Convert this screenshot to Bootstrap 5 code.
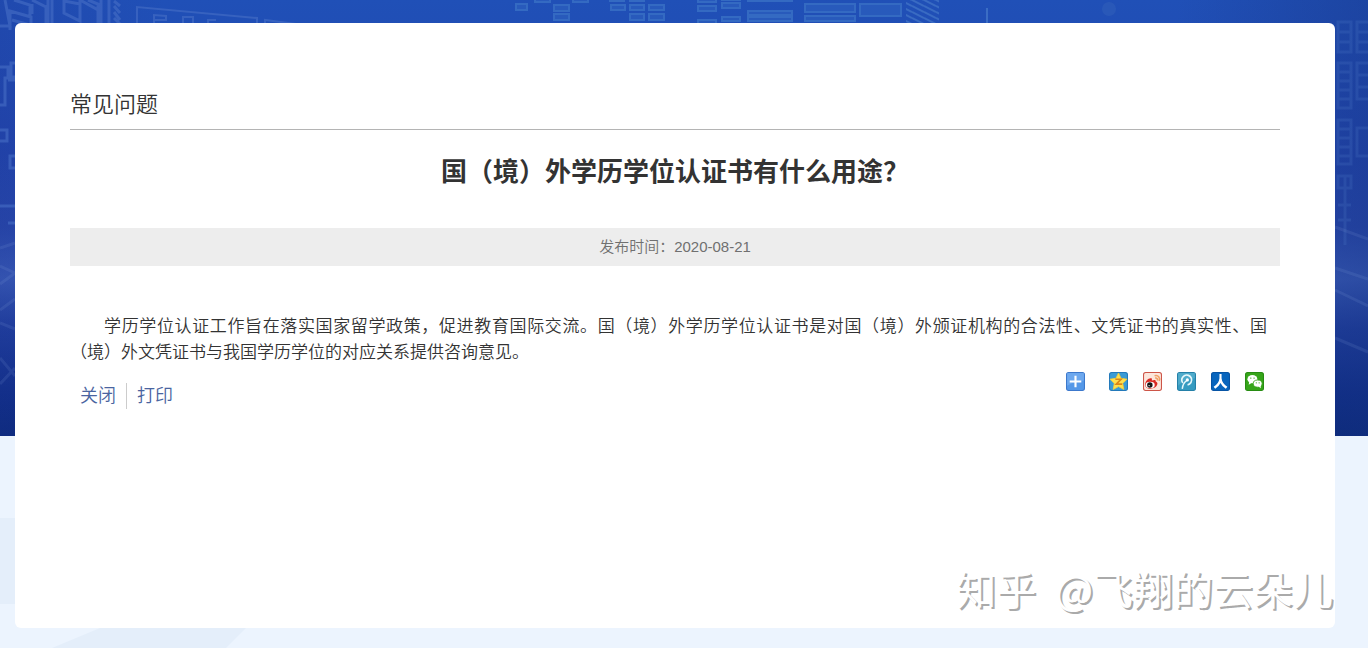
<!DOCTYPE html>
<html lang="zh-CN">
<head>
<meta charset="utf-8">
<meta name="viewport" content="width=device-width, initial-scale=1">
<title>常见问题</title>
<link href="https://cdn.jsdelivr.net/npm/bootstrap@5.3.0/dist/css/bootstrap.min.css" rel="stylesheet">
<style>
body{background:#ecf4fe;color:#333;font-family:"Liberation Sans","Noto Sans CJK SC",sans-serif;font-weight:350}
.page-shell{padding:23px 33px 20px 15px}
.hero-art{height:436px;z-index:-1}
.floor-art{z-index:-1}
.panel{background:#fff;border-radius:6px;padding:58px 55px;min-height:calc(100vh - 43px)}
.section-title{font-size:22px;line-height:48px;border-bottom:1px solid #b4b4b4;font-weight:350}
.article-title{font-size:26px;line-height:40px;font-weight:700;margin:20px 0 38px;font-family:"Noto Sans CJK SC",sans-serif}
.meta-bar{background:#ededed;color:#707070;font-size:15px;line-height:38px;margin-bottom:46px}
.article-text{font-size:17px;line-height:26px;text-indent:2em;text-align:justify;padding-right:13px;font-family:"Noto Sans CJK SC",sans-serif}
.page-links{margin-top:11px;font-size:18px;line-height:26px}
.page-links a{color:#4a64a0;text-decoration:none;padding:0 10px}
.page-links a + a{border-left:1px solid #ccc}
.share-row{gap:15px;margin-right:16px}
.share-row button{width:19px;height:19px;line-height:0}
.share-row button:first-child{margin-right:9px}
.watermark{right:2px;bottom:14px;gap:19px;font-family:"Noto Sans CJK SC",sans-serif;font-size:40px;line-height:52px;font-weight:400;color:#fff;text-shadow:2px 2px 0 #aaa;pointer-events:none}
</style>
</head>
<body class="position-relative">
<svg class="hero-art position-absolute top-0 start-0 w-100" viewBox="0 0 1368 436" preserveAspectRatio="none" aria-hidden="true">
  <defs>
    <linearGradient id="sky" x1="0" y1="0" x2="0" y2="1">
      <stop offset="0" stop-color="#2050b7"/><stop offset=".35" stop-color="#2146ae"/><stop offset=".52" stop-color="#2748ac"/>
      <stop offset=".64" stop-color="#385bb8"/><stop offset=".75" stop-color="#1f3f9f"/><stop offset=".9" stop-color="#102f8a"/><stop offset="1" stop-color="#0b2a7d"/>
    </linearGradient>
    <linearGradient id="edge"><stop offset="0" stop-color="#20308c" stop-opacity=".2"/><stop offset=".12" stop-color="#20308c" stop-opacity="0"/><stop offset=".86" stop-color="#16307c" stop-opacity="0"/><stop offset="1" stop-color="#16307c" stop-opacity=".35"/></linearGradient>
    <pattern id="hatch" width="12" height="6" patternUnits="userSpaceOnUse"><path d="M0 0L12 6M0 6L12 12M0-6L12 0" stroke="#467ac9" stroke-width="2"/></pattern>
  </defs>
  <rect width="1368" height="436" fill="url(#sky)"/>
  <rect width="1368" height="436" fill="url(#edge)"/>
  <g fill="none" stroke="#4a72c8" stroke-width="3" opacity=".55">
    <path d="M5 0L10 26H0M10 30V11L31 17V30M12 20L30 25M14 0L30 5V17M32 0L46 7V24M48 0V24M52 0V24M32 4V14M64 0V13L80 21V0M64 1L80 4M80 0L98 10V24M88 0L98 4V24M101 0V24M109 0V24M114 1L120 6M114 6L120 13M114 12L120 20M114 18L120 24"/>
    <path stroke-width="2" d="M137 24V7L257 18V24M154 24V15L166 16V20H155M183 24V17H193V24M208 23V20H216M265 24V20L296 24"/>
    <path d="M0 67H8V78H5V105H0M15 63H11V77H15M8 80H15M0 130H7V141H0M15 156H10V168H15M0 206H15M8 223H15"/>
  </g>
  <g fill="#2d60bf" stroke="#4079c9" stroke-width="2" opacity=".65">
    <path d="M516 4H527V10H516ZM535-3H550V2H535ZM554 5H569V11H554ZM554 14H569V20H554ZM573-3H588V2H573ZM611 5H625V10H611ZM610-3H624V1H610ZM630-3H644V1H630ZM630 5H644V10H630ZM630 14H644V20H630ZM649 5H664V10H649ZM649 14H664V20H649ZM698-3H716V2H698ZM698 6H716V11H698ZM722-3H740V0H722ZM722 3H740V8H722ZM722 17H740V21H722ZM698 20H716V24H698Z"/>
    <path d="M748-3H792V1H748ZM748 11H792V15H748ZM748 17H792V21H748ZM805 4H855V12H805ZM805 16H855V21H805ZM860 4H901V16H860Z"/>
  </g>
  <rect x="906" width="33" height="23" fill="url(#hatch)" opacity=".65"/>
  <path d="M987 8V23" stroke="#477bcb" stroke-width="2" opacity=".7"/><circle cx="1109" cy="9" r="7" fill="#406cbd" opacity=".3"/>
  <g fill="none" stroke="#5680cb" stroke-width="3" opacity=".2">
    <path d="M1338 22H1351V52H1338ZM1338 32H1351M1338 42H1351M1357 22H1370V52H1357ZM1357 32H1370M1357 42H1370M1338 63H1351V108H1338ZM1338 72H1351M1338 81H1351M1338 90H1351M1338 99H1351M1357 63H1370V99H1357ZM1357 75H1370M1357 87H1370M1338 120H1351V164H1338ZM1338 129H1351M1338 138H1351M1338 147H1351M1338 156H1351M1357 128H1370V156H1357ZM1338 176H1351V188H1338ZM1345 176V245M1338 205H1351M1338 220H1351"/>
  </g>
  <g fill="none" stroke="#86a3dd" opacity=".14">
    <path d="M1335 227L1368 239M1335 268L1368 279M1335 290L1368 306M1335 338L1368 352M0 248L15 243M0 266L15 273M0 284L15 273M0 310L15 299M0 323L15 329M0 358L15 376M0 384L15 368" stroke-width="3"/>
  </g>
</svg>
<svg class="floor-art position-absolute bottom-0 start-0 w-100" height="136" viewBox="0 0 1368 136" preserveAspectRatio="none" aria-hidden="true">
  <path fill="#e4eefa" d="M0 6H15V92H0ZM52 136L100 116H246L226 136Z"/>
</svg>
<main class="page-shell">
  <article class="panel position-relative">
    <h2 class="section-title m-0">常见问题</h2>
    <h1 class="article-title text-center">国（境）外学历学位认证书有什么用途？</h1>
    <div class="meta-bar text-center">发布时间：<time datetime="2020-08-21">2020-08-21</time></div>
    <p class="article-text m-0">学历学位认证工作旨在落实国家留学政策，促进教育国际交流。国（境）外学历学位认证书是对国（境）外颁证机构的合法性、文凭证书的真实性、国（境）外文凭证书与我国学历学位的对应关系提供咨询意见。</p>
    <div class="d-flex justify-content-between align-items-start pt-2">
      <nav class="page-links d-flex"><a href="#">关闭</a><a href="#">打印</a></nav>
      <div class="share-row d-flex">
        <button type="button" class="border-0 p-0 bg-transparent" aria-label="更多分享"><svg width="19" height="19" viewBox="0 0 18 18"><rect x=".5" y=".5" width="17" height="17" rx="2" fill="#5598e8" stroke="#3c78cc"/><path d="M1 1H17V8Q8 9 1 13Z" fill="#7db3f1" opacity=".6"/><path d="M9 3.500V14.500M3.500 9H14.500" stroke="#fff" stroke-width="2"/></svg></button>
        <button type="button" class="border-0 p-0 bg-transparent" aria-label="QQ空间"><svg width="19" height="19" viewBox="0 0 18 18"><rect x=".5" y=".5" width="17" height="17" rx="2" fill="#3b9bd5" stroke="#2379ba"/><path d="M9 1L11.4 6L17 6.8L13 10.8L14 16.5L9 13.8L4 16.5L5 10.8L1 6.8L6.6 6Z" fill="#ffe04f" stroke="#f8cf35" stroke-width=".8"/><path d="M6 6.800H11.500L6.800 11.500H12.500" fill="none" stroke="#dc8615" stroke-width="1.5"/></svg></button>
        <button type="button" class="border-0 p-0 bg-transparent" aria-label="新浪微博"><svg width="19" height="19" viewBox="0 0 18 18"><rect x=".5" y=".5" width="17" height="17" rx="2" fill="#fce6dc" stroke="#cd5548"/><path d="M2 12C2 8 6 5 8 6C9 6.500 8 8 8.500 8C11 7 12.500 7.500 12 9C15 10 13.500 13 11.500 14.500C7 17 2 16 2 12Z" fill="#d92a24"/><ellipse cx="6.800" cy="12.200" rx="4.300" ry="3" fill="#fff"/><circle cx="6.500" cy="12.400" r="2.600" fill="#151515"/><circle cx="5.800" cy="12.800" r=".6" fill="#fff"/><path d="M11 3.500C14.500 2.500 16.500 5.500 15.300 8.500M11.500 5.800C13.300 5.400 14 6.500 13.500 8" fill="none" stroke="#f0a064" stroke-width="1.500"/></svg></button>
        <button type="button" class="border-0 p-0 bg-transparent" aria-label="腾讯微博"><svg width="19" height="19" viewBox="0 0 18 18"><rect x=".5" y=".5" width="17" height="17" rx="2" fill="#369bc1" stroke="#2480a8"/><path d="M1 1H17V6Q7 6 1 13Z" fill="#67bbd6" opacity=".5"/><path d="M5.500 10.500A4.700 4.700 0 1 1 10 12.200" fill="none" stroke="#e6f7fb" stroke-width="1.600"/><path d="M5 16Q5.500 10.500 9.300 8" fill="none" stroke="#e6f7fb" stroke-width="1.400"/><circle cx="9.800" cy="7.500" r="1.500" fill="#fff"/></svg></button>
        <button type="button" class="border-0 p-0 bg-transparent" aria-label="人人网"><svg width="19" height="19" viewBox="0 0 18 18"><rect x=".5" y=".5" width="17" height="17" rx="2" fill="#0865bd" stroke="#0754a5"/><path d="M8 2H10V6Q10.500 11 15.500 14L14 15.800Q10.500 13.800 9 10.500Q7.500 13.800 4 15.800L2.500 14Q7.500 11 8 6Z" fill="#fff"/></svg></button>
        <button type="button" class="border-0 p-0 bg-transparent" aria-label="微信"><svg width="19" height="19" viewBox="0 0 18 18"><rect x=".5" y=".5" width="17" height="17" rx="2" fill="#36a51a" stroke="#278c12"/><ellipse cx="7" cy="6.800" rx="4.700" ry="3.900" fill="#fff"/><path d="M4 9L3.500 12L7 10Z" fill="#fff"/><ellipse cx="12" cy="11" rx="4.200" ry="3.400" fill="#fff" stroke="#36a51a" stroke-width=".8"/><path d="M12.500 13.500L15 15.500L14.800 12.500Z" fill="#fff"/><g fill="#36a51a"><circle cx="5.500" cy="5.800" r=".7"/><circle cx="8.600" cy="5.800" r=".7"/><circle cx="10.700" cy="10.300" r=".6"/><circle cx="13.400" cy="10.300" r=".6"/></g></svg></button>
      </div>
    </div>
    <div class="watermark d-flex position-absolute text-nowrap"><span>知乎</span> <span>@飞翔的云朵儿</span></div>
  </article>
</main>
<script src="https://cdn.jsdelivr.net/npm/bootstrap@5.3.0/dist/js/bootstrap.bundle.min.js"></script>
</body>
</html>
